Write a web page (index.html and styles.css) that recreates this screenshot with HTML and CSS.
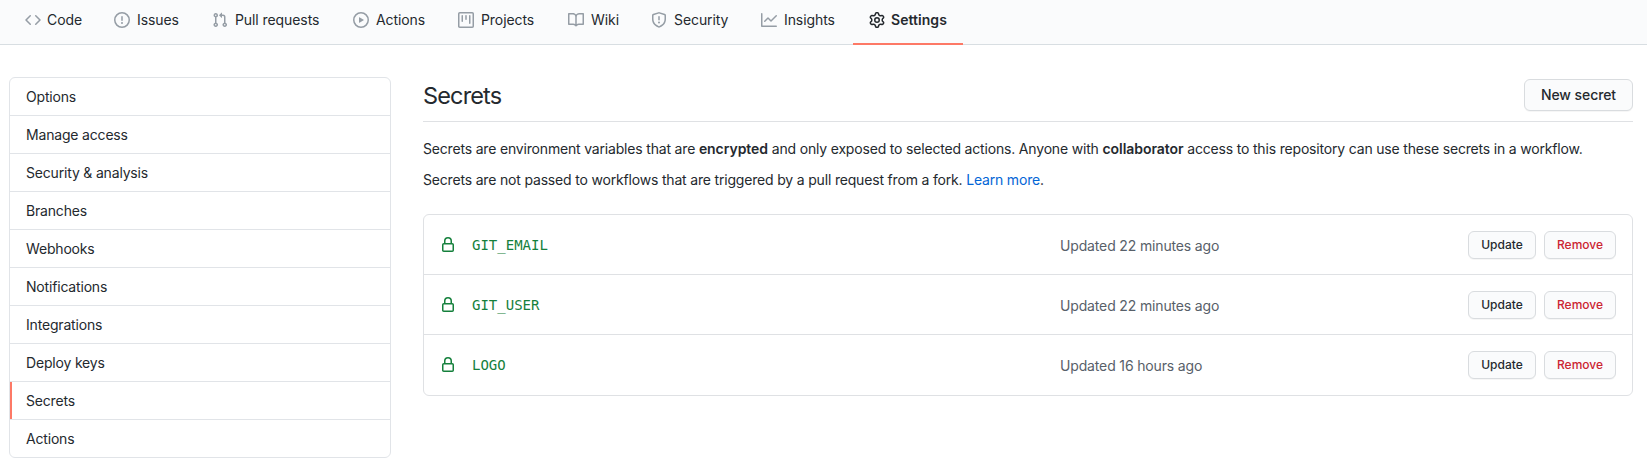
FILE: index.html
```html
<!DOCTYPE html>
<html lang="en">
<head>
<meta charset="utf-8">
<title>Secrets</title>
<link rel="stylesheet" href="styles.css">
</head>
<body>
<nav class="repo-nav">
  <a class="tab tab-code"><svg class="icon" viewBox="0 0 16 16"><path fill-rule="evenodd" d="M4.72 3.22a.75.75 0 011.06 1.06L2.06 8l3.72 3.72a.75.75 0 11-1.06 1.06L.47 8.53a.75.75 0 010-1.06l4.25-4.25zm6.56 0a.75.75 0 10-1.06 1.06L13.94 8l-3.72 3.72a.75.75 0 101.06 1.06l4.25-4.25a.75.75 0 000-1.06l-4.25-4.25z"/></svg><span>Code</span></a>
  <a class="tab tab-issues"><svg class="icon" viewBox="0 0 16 16"><path fill-rule="evenodd" d="M8 1.5a6.5 6.5 0 100 13 6.5 6.5 0 000-13zM0 8a8 8 0 1116 0A8 8 0 010 8zm9 3a1 1 0 11-2 0 1 1 0 012 0zm-.25-6.25a.75.75 0 00-1.5 0v3.5a.75.75 0 001.5 0v-3.5z"/></svg><span>Issues</span></a>
  <a class="tab tab-pulls"><svg class="icon" viewBox="0 0 16 16"><path fill-rule="evenodd" d="M7.177 3.073L9.573.677A.25.25 0 0110 .854v4.792a.25.25 0 01-.427.177L7.177 3.427a.25.25 0 010-.354zM3.75 2.5a.75.75 0 100 1.5.75.75 0 000-1.5zm-2.25.75a2.25 2.25 0 113 2.122v5.256a2.251 2.251 0 11-1.5 0V5.372A2.25 2.25 0 011.5 3.25zM11 2.5h-1V4h1a1 1 0 011 1v5.628a2.251 2.251 0 101.5 0V5A2.5 2.5 0 0011 2.5zm1 10.25a.75.75 0 111.5 0 .75.75 0 01-1.5 0zM3.75 12a.75.75 0 100 1.5.75.75 0 000-1.5z"/></svg><span>Pull requests</span></a>
  <a class="tab tab-actions"><svg class="icon" viewBox="0 0 16 16"><path fill-rule="evenodd" d="M1.5 8a6.5 6.5 0 1113 0 6.5 6.5 0 01-13 0zM8 0a8 8 0 100 16A8 8 0 008 0zM6.379 5.227A.25.25 0 006 5.442v5.117a.25.25 0 00.379.214l4.264-2.559a.25.25 0 000-.428L6.379 5.227z"/></svg><span>Actions</span></a>
  <a class="tab tab-projects"><svg class="icon" viewBox="0 0 16 16"><path fill-rule="evenodd" d="M1.75 0A1.75 1.75 0 000 1.75v12.5C0 15.216.784 16 1.75 16h12.5A1.75 1.75 0 0016 14.25V1.75A1.75 1.75 0 0014.25 0H1.75zM1.5 1.75a.25.25 0 01.25-.25h12.5a.25.25 0 01.25.25v12.5a.25.25 0 01-.25.25H1.75a.25.25 0 01-.25-.25V1.75zM11.75 3a.75.75 0 00-.75.75v7.5a.75.75 0 001.5 0v-7.5a.75.75 0 00-.75-.75zm-8.25.75a.75.75 0 011.5 0v5.5a.75.75 0 01-1.5 0v-5.5zM8 3a.75.75 0 00-.75.75v3.5a.75.75 0 001.5 0v-3.5A.75.75 0 008 3z"/></svg><span>Projects</span></a>
  <a class="tab tab-wiki"><svg class="icon" viewBox="0 0 16 16"><path fill-rule="evenodd" d="M0 1.75A.75.75 0 01.75 1h4.253c1.227 0 2.317.59 3 1.501A3.744 3.744 0 0111.006 1h4.245a.75.75 0 01.75.75v10.5a.75.75 0 01-.75.75h-4.507a2.25 2.25 0 00-1.591.659l-.622.621a.75.75 0 01-1.06 0l-.622-.621A2.25 2.25 0 005.258 13H.75a.75.75 0 01-.75-.75V1.75zm8.755 3a2.25 2.25 0 012.25-2.25H14.5v9h-3.757c-.71 0-1.4.201-1.992.572l.004-7.322zm-1.504 7.324l.004-5.073-.002-2.253A2.25 2.25 0 005.003 2.5H1.5v9h3.757a3.75 3.75 0 011.994.574z"/></svg><span>Wiki</span></a>
  <a class="tab tab-security"><svg class="icon" viewBox="0 0 16 16"><path fill-rule="evenodd" d="M7.467.133a1.75 1.75 0 011.066 0l5.25 1.68A1.75 1.75 0 0115 3.48V7c0 1.566-.32 3.182-1.303 4.682-.983 1.498-2.585 2.813-5.032 3.855a1.7 1.7 0 01-1.33 0c-2.447-1.042-4.049-2.357-5.032-3.855C1.32 10.182 1 8.566 1 7V3.48a1.75 1.75 0 011.217-1.667l5.25-1.68zm.61 1.429a.25.25 0 00-.153 0l-5.25 1.68a.25.25 0 00-.174.238V7c0 1.358.275 2.666 1.057 3.86.784 1.194 2.121 2.34 4.366 3.297a.2.2 0 00.154 0c2.245-.956 3.582-2.104 4.366-3.298C13.225 9.666 13.5 8.36 13.5 7V3.48a.25.25 0 00-.174-.237l-5.25-1.68zM9 10.5a1 1 0 11-2 0 1 1 0 012 0zm-.25-5.75a.75.75 0 10-1.5 0v3a.75.75 0 001.5 0v-3z"/></svg><span>Security</span></a>
  <a class="tab tab-insights"><svg class="icon" viewBox="0 0 16 16"><path fill-rule="evenodd" d="M1.5 1.75a.75.75 0 00-1.5 0v12.5c0 .414.336.75.75.75h14.5a.75.75 0 000-1.5H1.5V1.75zm14.28 2.53a.75.75 0 00-1.06-1.06L10 7.94 7.53 5.47a.75.75 0 00-1.06 0L3.22 8.72a.75.75 0 001.06 1.06L7 7.06l2.47 2.47a.75.75 0 001.06 0l5.25-5.25z"/></svg><span>Insights</span></a>
  <a class="tab tab-settings selected"><svg class="icon" viewBox="0 0 16 16"><path fill-rule="evenodd" d="M7.429 1.525a6.593 6.593 0 011.142 0c.036.003.108.036.137.146l.289 1.105c.147.56.55.967.997 1.189.174.086.341.183.501.29.417.278.97.423 1.53.27l1.102-.303c.11-.03.175.016.195.046.219.31.41.641.573.989.014.031.022.11-.059.19l-.815.806c-.411.406-.562.957-.53 1.456a4.588 4.588 0 010 .582c-.032.499.119 1.05.53 1.456l.815.806c.08.08.073.159.059.19a6.494 6.494 0 01-.573.99c-.02.029-.086.074-.195.045l-1.103-.303c-.559-.153-1.112-.008-1.529.27-.16.107-.327.204-.5.29-.449.222-.851.628-.998 1.189l-.289 1.105c-.029.11-.101.143-.137.146a6.613 6.613 0 01-1.142 0c-.036-.003-.108-.037-.137-.146l-.289-1.105c-.147-.56-.55-.967-.997-1.189a4.502 4.502 0 01-.501-.29c-.417-.278-.97-.423-1.53-.27l-1.102.303c-.11.03-.175-.016-.195-.046a6.492 6.492 0 01-.573-.989c-.014-.031-.022-.11.059-.19l.815-.806c.411-.406.562-.957.53-1.456a4.587 4.587 0 010-.582c.032-.499-.119-1.05-.53-1.456l-.815-.806c-.08-.08-.073-.159-.059-.19a6.44 6.44 0 01.573-.99c.02-.029.086-.075.195-.045l1.103.303c.559.153 1.112.008 1.529-.27.16-.107.327-.204.5-.29.449-.222.851-.628.998-1.189l.289-1.105c.029-.11.101-.143.137-.146zM8 0c-.236 0-.47.01-.701.03-.743.065-1.29.615-1.458 1.261l-.29 1.106c-.017.066-.078.158-.211.224a5.994 5.994 0 00-.668.386c-.123.082-.233.09-.3.071L3.27 2.776c-.644-.177-1.392.02-1.82.63a7.977 7.977 0 00-.704 1.217c-.315.675-.111 1.422.363 1.891l.815.806c.05.048.098.147.088.294a6.084 6.084 0 000 .772c.01.147-.038.246-.088.294l-.815.806c-.474.469-.678 1.216-.363 1.891.2.428.436.835.704 1.218.428.609 1.176.806 1.82.63l1.103-.303c.066-.019.176-.011.299.071.213.143.436.272.668.386.133.066.194.158.212.224l.289 1.106c.169.646.715 1.196 1.458 1.26a8.094 8.094 0 001.402 0c.743-.064 1.29-.614 1.458-1.26l.29-1.106c.017-.066.078-.158.211-.224a5.98 5.98 0 00.668-.386c.123-.082.233-.09.3-.071l1.102.302c.644.177 1.392-.02 1.82-.63.268-.382.505-.789.704-1.217.315-.675.111-1.422-.364-1.891l-.814-.806c-.05-.048-.098-.147-.088-.294a6.1 6.1 0 000-.772c-.01-.147.039-.246.088-.294l.814-.806c.475-.469.679-1.216.364-1.891a7.992 7.992 0 00-.704-1.218c-.428-.609-1.176-.806-1.82-.63l-1.103.303c-.066.019-.176.011-.299-.071a5.991 5.991 0 00-.668-.386c-.133-.066-.194-.158-.212-.224L10.16 1.29C9.99.645 9.444.095 8.701.031A8.094 8.094 0 008 0zm1.5 8a1.5 1.5 0 11-3 0 1.5 1.5 0 013 0zM11 8a3 3 0 11-6 0 3 3 0 016 0z"/></svg><span>Settings</span></a>
</nav>
<div class="layout">
  <aside class="menu">
    <a class="menu-item">Options</a>
    <a class="menu-item">Manage access</a>
    <a class="menu-item">Security &amp; analysis</a>
    <a class="menu-item">Branches</a>
    <a class="menu-item">Webhooks</a>
    <a class="menu-item">Notifications</a>
    <a class="menu-item">Integrations</a>
    <a class="menu-item">Deploy keys</a>
    <a class="menu-item current">Secrets</a>
    <a class="menu-item">Actions</a>
  </aside>
  <main class="content">
    <header class="subhead"><h2 class="title">Secrets</h2><button class="btn">New secret</button></header>
    <p class="note first">Secrets are environment variables that are <strong>encrypted</strong> and only exposed to selected actions. Anyone with <strong>collaborator</strong> access to this repository can use these secrets in a workflow.</p>
    <p class="note second">Secrets are not passed to workflows that are triggered by a pull request from a fork. <a class="link">Learn more</a>.</p>
    <ul class="secrets">
      <li class="secret"><svg class="lock" viewBox="0 0 16 16"><path fill-rule="evenodd" d="M4 4v2h-.25A1.75 1.75 0 002 7.75v5.5c0 .966.784 1.75 1.75 1.75h8.5A1.75 1.75 0 0014 13.25v-5.5A1.75 1.75 0 0012.25 6H12V4a4 4 0 10-8 0zm6.500 2V4a2.500 2.500 0 10-5 0v2h5zM12 7.500h.25a.25.25 0 01.25.25v5.500a.25.25 0 01-.25.25h-8.500a.25.25 0 01-.25-.25v-5.500a.25.25 0 01.25-.25H12z"/></svg><code class="name">GIT_EMAIL</code><span class="updated">Updated 22 minutes ago</span><button class="btn btn-sm">Update</button><button class="btn btn-sm btn-danger">Remove</button></li>
      <li class="secret"><svg class="lock" viewBox="0 0 16 16"><path fill-rule="evenodd" d="M4 4v2h-.25A1.75 1.75 0 002 7.75v5.5c0 .966.784 1.75 1.75 1.75h8.5A1.75 1.75 0 0014 13.25v-5.5A1.75 1.75 0 0012.25 6H12V4a4 4 0 10-8 0zm6.500 2V4a2.500 2.500 0 10-5 0v2h5zM12 7.500h.25a.25.25 0 01.25.25v5.500a.25.25 0 01-.25.25h-8.500a.25.25 0 01-.25-.25v-5.500a.25.25 0 01.25-.25H12z"/></svg><code class="name">GIT_USER</code><span class="updated">Updated 22 minutes ago</span><button class="btn btn-sm">Update</button><button class="btn btn-sm btn-danger">Remove</button></li>
      <li class="secret"><svg class="lock" viewBox="0 0 16 16"><path fill-rule="evenodd" d="M4 4v2h-.25A1.75 1.75 0 002 7.75v5.5c0 .966.784 1.75 1.75 1.75h8.5A1.75 1.75 0 0014 13.25v-5.5A1.75 1.75 0 0012.25 6H12V4a4 4 0 10-8 0zm6.500 2V4a2.500 2.500 0 10-5 0v2h5zM12 7.500h.25a.25.25 0 01.25.25v5.500a.25.25 0 01-.25.25h-8.500a.25.25 0 01-.25-.25v-5.500a.25.25 0 01.25-.25H12z"/></svg><code class="name">LOGO</code><span class="updated">Updated 16 hours ago</span><button class="btn btn-sm">Update</button><button class="btn btn-sm btn-danger">Remove</button></li>
    </ul>
  </main>
</div>
</body>
</html>
```
FILE: styles.css
```css
* { box-sizing: border-box; }
body {
  margin: 0;
  background: #fff;
  color: #24292e;
  font-family: Inter, "Liberation Sans", sans-serif;
  font-size: 14px;
  line-height: 21px;
  letter-spacing: -0.18px;
  overflow: hidden;
}
.repo-nav {
  display: flex;
  height: 45px;
  padding-left: 9px;
  background: #fafbfc;
  border-bottom: 1px solid #d8dee2;
  letter-spacing: -0.08px;
}
.tab {
  display: flex;
  align-items: flex-start;
  gap: 7px;
  height: 45px;
  padding: 9px 0 0 16px;
  white-space: nowrap;
}
.tab-code { width: 89px; gap: 6px; }
.tab-issues { width: 98px; }
.tab-pulls { width: 141px; }
.tab-actions { width: 105px; }
.tab-projects { width: 110px; }
.tab-wiki { width: 83px; }
.tab-security { width: 110px; }
.tab-insights { width: 108px; }
.tab-settings { width: 110px; gap: 6px; }
.icon {
  flex: none;
  width: 16px;
  height: 16px;
  margin-top: 3px;
  fill: #959da5;
}
.selected {
  border-bottom: 2px solid #fd7966;
  font-weight: 600;
  letter-spacing: 0.05px;
}
.selected .icon { fill: #24292e; }
.layout {
  display: flex;
  align-items: flex-start;
  gap: 32px;
  padding: 32px 14px 0 9px;
}
.menu {
  flex: none;
  width: 382px;
  border: 1px solid #e1e4e8;
  border-radius: 6px;
}
.menu-item {
  display: block;
  height: 38px;
  padding: 8px 16px;
  border-bottom: 1px solid #e1e4e8;
}
.menu-item:last-child {
  height: 37px;
  border-bottom: 0;
}
.current {
  background: linear-gradient(#fd7966, #fd7966) left / 2px 100% no-repeat;
}
.content { flex: 1; min-width: 0; }
.subhead {
  display: flex;
  justify-content: space-between;
  height: 45px;
  padding-top: 2px;
  border-bottom: 1px solid #dfe1e4;
}
.title {
  margin: 0;
  font-size: 23.5px;
  font-weight: 400;
  line-height: 33px;
  letter-spacing: -0.85px;
}
.btn {
  width: 109px;
  height: 32px;
  padding: 0;
  border: 1px solid #d9dcdf;
  border-radius: 6px;
  background: #fafbfc;
  box-shadow: 0 1px 0 rgba(27, 31, 35, 0.04);
  color: #24292e;
  font: 500 14px/20px Inter, "Liberation Sans", sans-serif;
  letter-spacing: -0.08px;
}
.note { margin: 0; white-space: nowrap; }
.note strong { font-weight: 600; letter-spacing: -0.05px; }
.first { margin-top: 16px; }
.second { margin-top: 10px; }
.link { color: #0366d6; }
.secrets {
  margin: 24px 0 0;
  padding: 0;
  border: 1px solid #dfe1e4;
  border-radius: 6px;
  list-style: none;
}
.secret {
  display: flex;
  height: 60px;
  padding: 16px 16px 0;
  border-bottom: 1px solid #dfe1e4;
}
.secret:last-child { border-bottom: 0; }
.lock {
  width: 16px;
  height: 16px;
  margin-top: 6px;
  fill: #15803c;
}
.name {
  width: 588px;
  margin: 4px 0 0 16px;
  color: #15803c;
  font: 14px/21px "DejaVu Sans Mono", monospace;
  letter-spacing: 0;
}
.updated {
  margin: 4px auto 0 0;
  color: #586069;
  letter-spacing: -0.15px;
}
.btn-sm {
  width: 68px;
  height: 28px;
  font-size: 12px;
  letter-spacing: 0;
}
.btn-danger {
  width: 72px;
  margin-left: 8px;
  color: #cb2431;
}
```
